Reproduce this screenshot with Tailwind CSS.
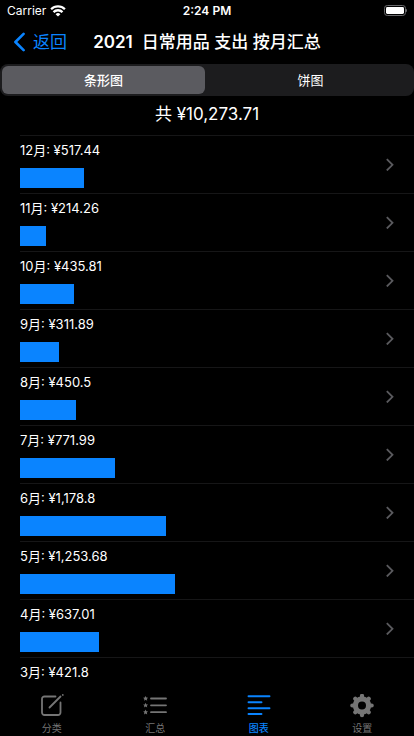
<!DOCTYPE html>
<html lang="zh-CN">
<head>
    <meta charset="UTF-8">
    <meta name="viewport" content="width=device-width, initial-scale=1.0">
    <title>按月汇总</title>
    <script src="https://cdn.jsdelivr.net/npm/@tailwindcss/browser@4"></script>
</head>
<body class="bg-black text-white font-['Inter','Noto_Sans_CJK_SC',sans-serif] h-screen flex flex-col overflow-hidden">
    <!-- Status bar -->
    <div class="grid grid-cols-3 items-center h-5 px-[7px] pt-0.5 shrink-0 text-xs leading-4">
        <div class="flex items-center gap-1">
            <span>Carrier</span>
            <svg class="w-4 h-3" viewBox="0 0 16 12" fill="none" stroke="white" stroke-width="2.3">
                <path d="M1.1 4.2a9.9 9.9 0 0 1 13.8 0M3.5 7.1a6.4 6.4 0 0 1 9 0"/>
                <path d="M8 11.6L5.6 9.2a3.4 3.4 0 0 1 4.800 0z" fill="white" stroke="none"/>
            </svg>
        </div>
        <span class="text-center font-semibold">2:24 PM</span>
        <svg class="w-6 h-3 justify-self-end" viewBox="0 0 24 12">
            <rect x="1.500" y="0.500" width="21" height="10" rx="2.800" fill="none" stroke="#68686b"/>
            <rect x="3" y="2" width="18" height="7" rx="1.400" fill="white"/>
            <path d="M23 3.800c1.400.5 1.400 2.900 0 3.400z" fill="#68686b"/>
        </svg>
    </div>

    <!-- Navigation bar -->
    <header class="grid grid-cols-[1fr_auto_1fr] items-center h-11 px-3 shrink-0">
        <button type="button" class="flex items-center gap-2 pl-px text-[17px] leading-6 text-[#0a84ff]">
            <svg class="w-3 h-5" viewBox="0 0 12 20" fill="none" stroke="currentColor" stroke-width="2.600" stroke-linecap="round" stroke-linejoin="round">
                <path d="M10.600 1.800L2.400 10l8.200 8.200"/>
            </svg>
            返回
        </button>
        <h1 class="text-[17px] leading-6 font-medium whitespace-pre"><span class="font-semibold">2021</span>  日常用品 支出 按月汇总</h1>
    </header>

    <!-- Chart type switch -->
    <div class="grid grid-cols-2 gap-1 h-8 p-0.5 shrink-0 rounded-lg bg-[#1c1c1e] text-[13px] leading-5">
        <button type="button" aria-pressed="true" class="rounded-md bg-[#5b5b60] font-medium">条形图</button>
        <button type="button" aria-pressed="false">饼图</button>
    </div>

    <main class="flex-1 min-h-0 overflow-hidden">
        <div class="ml-5 h-10 border-b border-[#161617]">
            <p class="-ml-5 pt-1.5 text-center text-[17px] leading-6">共 ¥10,273.71</p>
        </div>
        <ul id="months" class="ml-5"></ul>
    </main>

    <!-- Tab bar -->
    <nav class="grid grid-cols-4 h-14 shrink-0 bg-black text-[10px] leading-3 text-[#757575]">
        <a href="#" class="flex flex-col items-center gap-1 pt-3.5">
            <svg class="w-6 h-6" viewBox="0 0 24 24" fill="none" stroke="currentColor" stroke-width="1.800" stroke-linecap="round">
                <path d="M15.500 2.500H4.500a2.500 2.500 0 0 0-2.500 2.500V18.500A2.500 2.500 0 0 0 4.500 21H18a2.500 2.500 0 0 0 2.500-2.500V8.500" stroke-linejoin="round"/>
                <path d="M9.500 13.500L20.500 2.500M22.800.9v0"/>
            </svg>
            分类
        </a>
        <a href="#" class="flex flex-col items-center gap-1 pt-3.5">
            <svg class="w-6 h-6" viewBox="0 0 24 24" fill="currentColor">
                <defs>
                    <path id="star" d="M0-2.600L.8-.9 2.500-.7 1.200.4 1.600 2.200 0 1.300-1.600 2.200-1.200.4-2.500-.7-.8-.9z"/>
                </defs>
                <use href="#star" x="2.600" y="4.500"/>
                <use href="#star" x="2.600" y="11.300"/>
                <use href="#star" x="2.600" y="18.200"/>
                <path d="M8 4.500h15M8 11.300h15M8 18.200h15" stroke="currentColor" stroke-width="1.800" stroke-linecap="round"/>
            </svg>
            汇总
        </a>
        <a href="#" aria-current="page" class="flex flex-col items-center gap-1 pt-3.5 font-medium text-[#0a84ff]">
            <svg class="w-6 h-6" viewBox="0 0 24 24" stroke="currentColor" stroke-width="1.900" stroke-linecap="round">
                <path d="M1.500 2.300h21M1.500 8.200h13M1.500 14.200h21M1.500 20h13"/>
            </svg>
            图表
        </a>
        <a href="#" class="flex flex-col items-center gap-1 pt-3.5">
            <svg class="w-6 h-6" viewBox="0 0 24 24" fill="none" stroke="currentColor">
                <circle cx="12" cy="11.500" r="6.600" stroke-width="5.200"/>
                <path d="M12 1.800v2M12 19.200v2M2.300 11.500h2M19.700 11.500h2M5.300 4.800l1.400 1.400M17.300 16.800l1.400 1.400M5.300 18.200l1.400-1.400M17.300 6.200l1.400-1.400" stroke-width="4.200" stroke-linecap="round"/>
            </svg>
            设置
        </a>
    </nav>

    <script>
        const months = [
            [12, 517.44], [11, 214.26], [10, 435.81], [9, 311.89], [8, 450.5],
            [7, 771.99], [6, 1178.8], [5, 1253.68], [4, 637.01], [3, 421.8]
        ];
        // Amount that fills the whole row
        const fullScale = 2960;

        months.forEach(([month, amount]) => {
            const row = document.createElement('li');
            row.innerHTML = `
                <a href="#" class="flex items-center pr-5 pt-1 pb-[5px] border-b border-[#161617]">
                    <div class="flex-1">
                        <p class="text-[13px] leading-5">${month}月: ¥${amount.toLocaleString('en-US')}</p>
                        <div class="mt-2 h-5 bg-[#0a84ff]" style="width: ${amount / fullScale * 100}%"></div>
                    </div>
                    <svg class="w-2 h-3.5 shrink-0" viewBox="0 0 8 14" fill="none" stroke="#5a5a5e" stroke-width="1.800">
                        <path d="M.8 2.100L6.500 7.800.8 13.500"/>
                    </svg>
                </a>
            `;
            document.getElementById('months').appendChild(row);
        });
    </script>
</body>
</html>
